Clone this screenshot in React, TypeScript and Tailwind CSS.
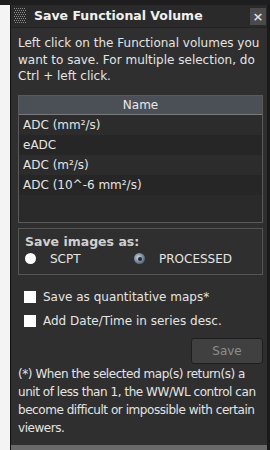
import { useState } from "react";

const font = { fontFamily: '"DejaVu Sans", Verdana, sans-serif' };

function Grip() {
  return (
    <svg width="12" height="16" viewBox="0 0 12 16" className="shrink-0">
      {Array.from({ length: 8 }).map((_, r) =>
        Array.from({ length: 6 }).map((_, c) => (
          <rect key={`${r}-${c}`} x={c * 2 + (r % 2)} y={r * 2} width="1" height="1" fill="#8a8a8a" />
        ))
      )}
    </svg>
  );
}

function Radio({ checked, label }: { checked: boolean; label: string }) {
  return (
    <div className="flex items-center gap-[14px]">
      {checked ? (
        <span className="w-[11px] h-[11px] rounded-full bg-[radial-gradient(circle_at_40%_40%,#c8d4e0,#56687a_70%)] flex items-center justify-center">
          <span className="w-[4px] h-[4px] rounded-full bg-[#1f2a36]" />
        </span>
      ) : (
        <span className="w-[11px] h-[11px] rounded-full bg-white" />
      )}
      <span>{label}</span>
    </div>
  );
}

function Check({ label }: { label: string }) {
  const [on, setOn] = useState(false);
  return (
    <div className="flex items-center gap-[7px] pl-[6px] h-[13px]" onClick={() => setOn(p => !p)}>
      <span className="w-[12px] h-[12px] bg-white shrink-0">{on ? "" : null}</span>
      <span>{label}</span>
    </div>
  );
}

export default function App() {
  const rows = ["ADC (mm²/s)", "eADC", "ADC (m²/s)", "ADC (10^-6 mm²/s)"];
  return (
    <div className="w-[270px] h-[450px] overflow-hidden flex flex-col bg-[#1c1c1c]" style={font}>
      <div className="h-[5px] bg-[#1e1e1e] shrink-0" />
      <div className="flex flex-1 min-h-0">
        <div className="w-[10px] bg-[#f4f4f4] shrink-0" />
        <div className="flex-1 flex flex-col border-l border-[#111] border-r-[3px] border-r-[#1a1a1a] bg-[#2f2f2f]">
          <div className="h-[23px] flex items-center bg-[#2a2a2a] border-b border-[#222] pl-[3px] pr-[1px] shrink-0">
            <Grip />
            <span className="ml-[8px] text-[12.5px] font-bold text-[#f0f0f0] leading-none">Save Functional Volume</span>
            <span className="ml-auto w-[16px] h-[17px] bg-[#4a4a4a] flex items-center justify-center text-[#dcdcdc] text-[13px] font-bold leading-none">×</span>
          </div>
          <div className="flex-1 flex flex-col pl-[7px] pr-[4px] text-[12px] text-[#e4e4e4]">
            <p className="mt-[7px] leading-[16.5px] pr-[3px]">
              Left click on the Functional volumes you want to save. For multiple selection, do Ctrl + left click.
            </p>
            <div className="mt-[10px] h-[128px] border border-[#5a5a5a] bg-[#2a2a2a] flex flex-col">
              <div className="h-[19px] bg-[#4b5056] border-b border-[#7a7a7a] flex items-center justify-center text-[#e8e8e8]">Name</div>
              {rows.map((r, i) => (
                <div key={r} className={`h-[20px] flex items-center px-[4px] ${i % 2 === 1 ? "bg-[#262626]" : "bg-[#2c2c2c]"}`}>
                  {r}
                </div>
              ))}
            </div>
            <div className="mt-[5px] h-[47px] border border-[#555] flex flex-col px-[6px] pt-[5px]">
              <div className="font-bold text-[#cfcfcf] text-[12.5px] leading-[15px]">Save images as:</div>
              <div className="flex items-center mt-[1px]">
                <div className="w-[109px]">
                  <Radio checked={false} label="SCPT" />
                </div>
                <Radio checked label="PROCESSED" />
              </div>
            </div>
            <div className="mt-[16px] flex flex-col gap-[11px]">
              <Check label="Save as quantitative maps*" />
              <Check label="Add Date/Time in series desc." />
            </div>
            <div className="mt-[10px] flex justify-end">
              <div className="w-[72px] h-[26px] rounded-[3px] border border-[#1e1e1e] bg-[#404040] flex items-center justify-center text-[#8c8c8c]">Save</div>
            </div>
            <p className="mt-[1px] leading-[18px] tracking-[-0.45px]">
              (*) When the selected map(s) return(s) a unit of less than 1, the WW/WL control can become difficult or impossible with certain viewers.
            </p>
          </div>
          <div className="h-[5px] bg-[#6a6a6a] shrink-0 mt-auto" />
        </div>
      </div>
    </div>
  );
}
